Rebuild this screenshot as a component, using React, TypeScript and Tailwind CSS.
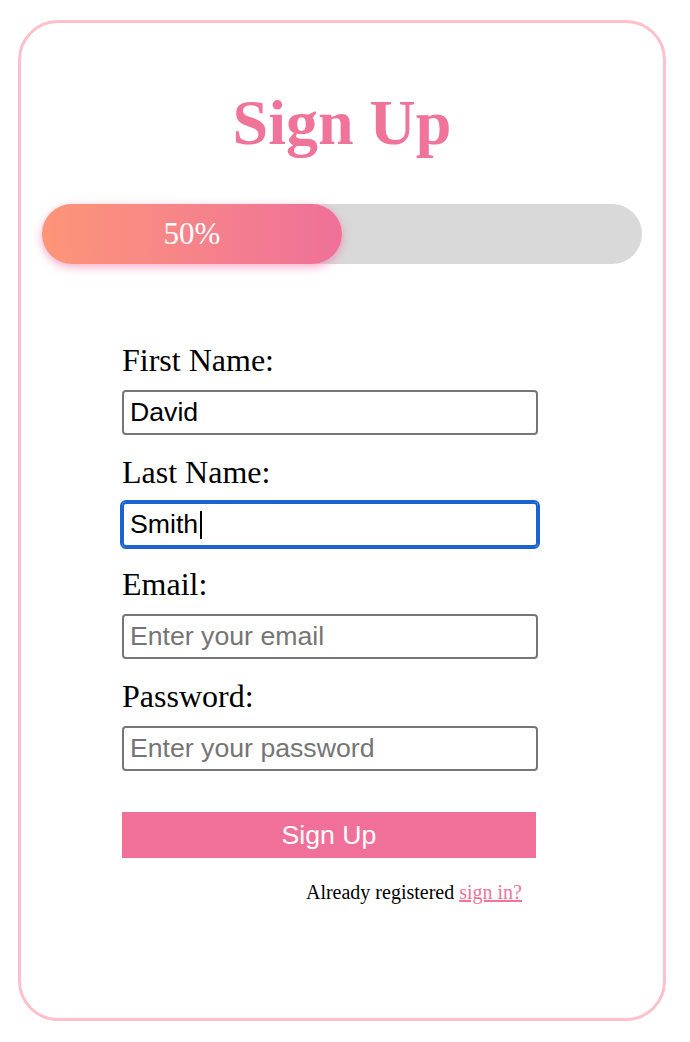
import React from "react";

const serif = "font-['Liberation_Serif','Times_New_Roman',serif]";

export default function App() {
  const labelCls =
    "block h-[36px] text-[32px] leading-[36px] text-black font-['Liberation_Serif','Times_New_Roman',serif]";
  const inputCls =
    "block mt-[12px] w-[416px] h-[45px] rounded-[4px] border-2 border-[#767676] bg-white pl-[6px] text-[26.67px] text-black font-['Liberation_Sans',Arial,sans-serif] placeholder:text-[#757575] outline-none";
  return (
    <div className="min-h-[1042px] w-[690px] bg-white pt-[20px] pl-[18px]">
      <div className="w-[648px] h-[1001px] rounded-[40px] border-[3px] border-[#ffc0cb] bg-white">
        <h1
          className={`mt-[68px] text-center text-[64px] leading-[64px] font-bold text-[#f07399] ${serif}`}
        >
          Sign Up
        </h1>
        <div className="mx-[21px] mt-[49px] h-[60px] rounded-full bg-[#d9d9d9]">
          <div
            className={`flex h-full w-1/2 items-center justify-center rounded-full bg-linear-to-r from-[#fd9577] to-[#ef7099] text-[31px] text-white shadow-[0_3px_10px_rgba(240,100,160,0.55)] ${serif}`}
          >
            50%
          </div>
        </div>
        <form className="ml-[101px] mt-[78px] w-[416px]" onSubmit={(e) => e.preventDefault()}>
          <div className="mb-[19px]">
            <label className={labelCls}>First Name:</label>
            <input className={inputCls} defaultValue="David" />
          </div>
          <div className="mb-[19px]">
            <label className={labelCls}>Last Name:</label>
            <div className="relative mt-[12px]">
              <input
                className="block w-[416px] h-[45px] rounded-[4px] border-2 border-[#1b63cf] bg-white pl-[6px] text-[26.67px] text-black font-['Liberation_Sans',Arial,sans-serif] outline-2 outline-offset-0 outline-[#1b63cf]"
                defaultValue="Smith"
              />
              <span className="absolute left-[78px] top-[9px] h-[28px] w-[2px] bg-black" />
            </div>
          </div>
          <div className="mb-[19px]">
            <label className={labelCls}>Email:</label>
            <input className={inputCls} placeholder="Enter your email" />
          </div>
          <div>
            <label className={labelCls}>Password:</label>
            <input className={inputCls} type="password" placeholder="Enter your password" />
          </div>
          <button
            type="submit"
            className="mt-[41px] block w-[414px] h-[46px] bg-[#f07099] text-center text-[26.67px] text-white font-['Liberation_Sans',Arial,sans-serif]"
          >
            Sign Up
          </button>
          <p
            className={`mt-[22px] w-[414px] pr-[14px] text-right text-[20px] leading-[24px] text-black ${serif}`}
          >
            Already registered{" "}
            <a href="#" className="text-[#f07399] underline">
              sign in?
            </a>
          </p>
        </form>
      </div>
    </div>
  );
}
